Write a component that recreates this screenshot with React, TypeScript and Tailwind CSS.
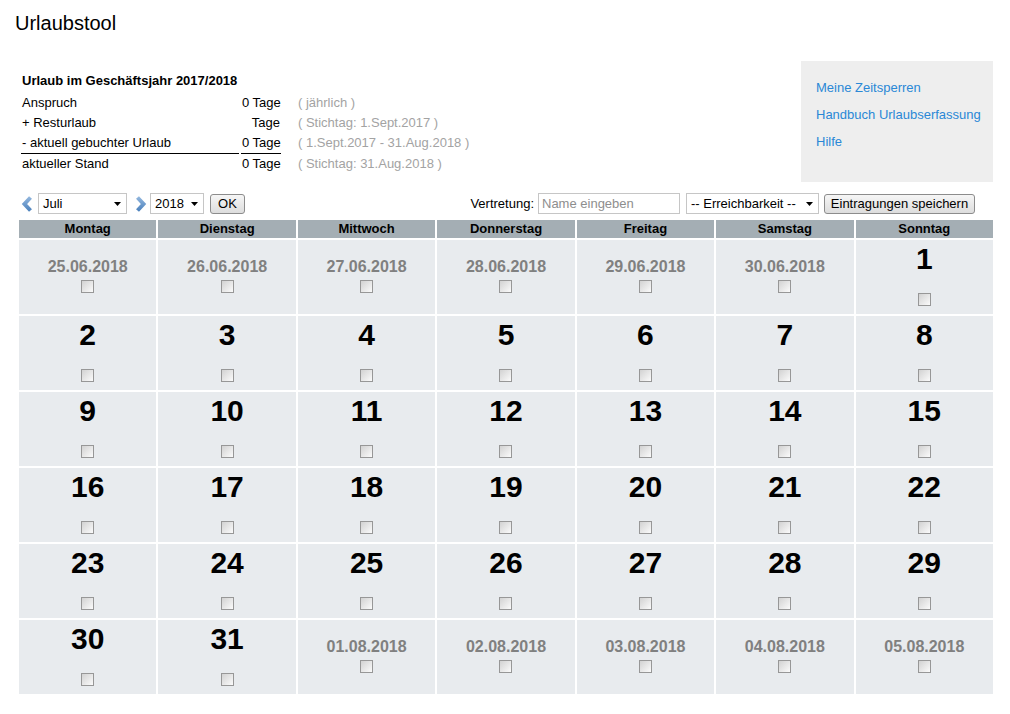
import React from "react";

const font = { fontFamily: '"Liberation Sans", Arial, Helvetica, sans-serif' };

function Check() {
  return (
    <span className="block w-[13px] h-[13px] border border-[#979797] bg-gradient-to-br from-[#d2d2d2] to-[#fbfbfb] box-border" />
  );
}

function Chevron({ dir }: { dir: "l" | "r" }) {
  return (
    <svg width="12" height="16" viewBox="0 0 12 16" className="block">
      <defs>
        <linearGradient id={"g" + dir} x1="0" y1="0" x2="0" y2="1">
          <stop offset="0" stopColor="#8fb4dc" />
          <stop offset="1" stopColor="#4f84be" />
        </linearGradient>
      </defs>
      {dir === "l" ? (
        <path d="M9.5 1.5 L3.5 8 L9.5 14.5" fill="none" stroke={"url(#g" + dir + ")"} strokeWidth="4" />
      ) : (
        <path d="M2.5 1.5 L8.5 8 L2.5 14.5" fill="none" stroke={"url(#g" + dir + ")"} strokeWidth="4" />
      )}
    </svg>
  );
}

function FakeSelect({ label, w }: { label: string; w: string }) {
  return (
    <div className={`${w} h-[21px] border border-[#c6c6c6] bg-white flex items-center pl-[4px] pr-[5px] text-[13px] text-black box-border`}>
      <span className="flex-1 leading-none whitespace-nowrap">{label}</span>
      <svg width="7" height="4" viewBox="0 0 7 4" className="block">
        <path d="M0 0 L7 0 L3.5 4 Z" fill="#000" />
      </svg>
    </div>
  );
}

type Cell = { kind: "past"; label: string } | { kind: "day"; n: number };

const days = ["Montag", "Dienstag", "Mittwoch", "Donnerstag", "Freitag", "Samstag", "Sonntag"];

const cells: Cell[] = [
  { kind: "past", label: "25.06.2018" },
  { kind: "past", label: "26.06.2018" },
  { kind: "past", label: "27.06.2018" },
  { kind: "past", label: "28.06.2018" },
  { kind: "past", label: "29.06.2018" },
  { kind: "past", label: "30.06.2018" },
  ...Array.from({ length: 31 }, (_, i) => ({ kind: "day" as const, n: i + 1 })),
  { kind: "past", label: "01.08.2018" },
  { kind: "past", label: "02.08.2018" },
  { kind: "past", label: "03.08.2018" },
  { kind: "past", label: "04.08.2018" },
  { kind: "past", label: "05.08.2018" },
];

const info = [
  { l: "Anspruch", v: "0 Tage", n: "( jährlich )" },
  { l: "+ Resturlaub", v: "Tage", n: "( Stichtag: 1.Sept.2017 )" },
  { l: "- aktuell gebuchter Urlaub", v: "0 Tage", n: "( 1.Sept.2017 - 31.Aug.2018 )", line: true },
  { l: "aktueller Stand", v: "0 Tage", n: "( Stichtag: 31.Aug.2018 )" },
];

export default function App() {
  return (
    <div style={font} className="w-[1010px] h-[714px] bg-white text-black overflow-hidden">
      <div className="pt-[11px] pl-[15px] text-[20px] leading-[24px]">Urlaubstool</div>

      <div className="mt-[26px] flex">
        <div className="pt-[10px] pl-[21px]">
          <div className="pl-[1px] text-[13px] leading-[20px] font-bold whitespace-nowrap">Urlaub im Geschäftsjahr 2017/2018</div>
          <div className="mt-[2px] grid grid-cols-[218px_40px_auto] gap-x-[2px] text-[13px] leading-[20px]">
            {info.map((r, i) => (
              <React.Fragment key={i}>
                <div className={`px-[1px] whitespace-nowrap ${r.line ? "border-b border-black" : ""}`}>{r.l}</div>
                <div className={`px-[1px] text-right whitespace-nowrap ${r.line ? "border-b border-black" : ""}`}>{r.v}</div>
                <div className="pl-[15px] text-[#a3a3a3] whitespace-nowrap">{r.n}</div>
              </React.Fragment>
            ))}
          </div>
        </div>
        <div className="ml-auto mr-[17px] w-[192px] h-[121px] bg-[#eeeeee] pl-[15px] pt-[13px] text-[13px] leading-[27px] text-[#2a88d6] whitespace-nowrap">
          <div>Meine Zeitsperren</div>
          <div>Handbuch Urlaubserfassung</div>
          <div>Hilfe</div>
        </div>
      </div>

      <div className="mt-[11px] flex items-center pl-[21px] h-[21px] text-[13px]">
        <Chevron dir="l" />
        <div className="ml-[5px]">
          <FakeSelect label="Juli" w="w-[89px]" />
        </div>
        <div className="ml-[8px]">
          <Chevron dir="r" />
        </div>
        <div className="ml-[3px]">
          <FakeSelect label="2018" w="w-[54px]" />
        </div>
        <div className="ml-[6px] w-[35px] h-[20px] border border-[#8c8c8c] rounded-[3px] bg-gradient-to-b from-[#f6f6f6] to-[#dddddd] flex items-center justify-center text-[13px] box-border">
          OK
        </div>
        <div className="ml-auto mr-[35px] flex items-center">
          <span className="whitespace-nowrap">Vertretung:</span>
          <div className="ml-[4px] w-[142px] h-[21px] border border-[#c6c6c6] bg-white flex items-center pl-[3px] text-[#8e8e8e] box-border whitespace-nowrap">
            Name eingeben
          </div>
          <div className="ml-[6px]">
            <FakeSelect label="-- Erreichbarkeit --" w="w-[133px]" />
          </div>
          <div className="ml-[5px] w-[151px] h-[20px] border border-[#8c8c8c] rounded-[3px] bg-gradient-to-b from-[#f6f6f6] to-[#dddddd] flex items-center justify-center box-border whitespace-nowrap">
            Eintragungen speichern
          </div>
        </div>
      </div>

      <div className="mt-[6px] ml-[19px] w-[974px] grid grid-cols-7 gap-x-[2px] gap-y-[2px] auto-rows-[74px] grid-rows-[18px]">
        {days.map((d) => (
          <div key={d} className="h-[18px] bg-[#a4aeb4] text-[13px] leading-[18px] font-bold text-center">
            {d}
          </div>
        ))}
        {cells.map((c, i) =>
          c.kind === "past" ? (
            <div key={i} className="h-[74px] bg-[#e8ebee] flex flex-col items-center pt-[18px]">
              <div className="text-[16px] leading-[18px] font-bold text-[#808080]">{c.label}</div>
              <div className="mt-[4px]">
                <Check />
              </div>
            </div>
          ) : (
            <div key={i} className="h-[74px] bg-[#e8ebee] flex flex-col items-center pt-[2px]">
              <div className="text-[30px] leading-[34px] font-bold">{c.n}</div>
              <div className="mt-[17px]">
                <Check />
              </div>
            </div>
          )
        )}
      </div>
    </div>
  );
}
